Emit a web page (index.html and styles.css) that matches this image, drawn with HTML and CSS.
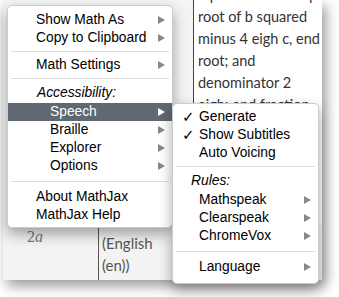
FILE: index.html
```html
<!DOCTYPE html>
<html lang="en">
<head>
    <meta charset="UTF-8">
    <title>MathJax menu</title>
    <link rel="stylesheet" href="styles.css">
</head>
<body>
    <div class="window">
        <div class="top-row">
            <div class="top-left">
                <div class="cut">alt text&nbsp;&nbsp;&nbsp;With Voice</div>
            </div>
            <div class="speech-text">
                <div class="cut">b plus or minus square</div>
                <div>root of b squared</div>
                <div>minus 4 eigh c, end</div>
                <div>root; and</div>
                <div>denominator 2</div>
                <div>eigh; end fraction</div>
            </div>
        </div>
        <div class="bottom-row">
            <div class="math-cell"><span>2</span><i>a</i></div>
            <div class="lang-cell">(English<br>(en))</div>
        </div>
    </div>

    <!-- context menu -->
    <div class="menu main-menu">
        <div class="item">
            <span class="text">Show Math As</span><span class="arrow"></span>
        </div>
        <div class="item">
            <span class="text">Copy to Clipboard</span><span class="arrow"></span>
        </div>
        <div class="rule"></div>
        <div class="item">
            <span class="text">Math Settings</span><span class="arrow"></span>
        </div>
        <div class="rule"></div>
        <div class="label">Accessibility:</div>
        <div class="item indent active">
            <span class="text">Speech</span><span class="arrow"></span>
        </div>
        <div class="item indent">
            <span class="text">Braille</span><span class="arrow"></span>
        </div>
        <div class="item indent">
            <span class="text">Explorer</span><span class="arrow"></span>
        </div>
        <div class="item indent">
            <span class="text">Options</span><span class="arrow"></span>
        </div>
        <div class="rule wide"></div>
        <div class="item">
            <span class="text">About MathJax</span>
        </div>
        <div class="item">
            <span class="text">MathJax Help</span>
        </div>
    </div>

    <!-- speech submenu -->
    <div class="menu sub-menu">
        <div class="item">
            <span class="check">&#10003;</span><span class="text">Generate</span>
        </div>
        <div class="item">
            <span class="check">&#10003;</span><span class="text">Show Subtitles</span>
        </div>
        <div class="item">
            <span class="check"></span><span class="text">Auto Voicing</span>
        </div>
        <div class="rule"></div>
        <div class="label">Rules:</div>
        <div class="item">
            <span class="check"></span><span class="text">Mathspeak</span><span class="arrow"></span>
        </div>
        <div class="item">
            <span class="check"></span><span class="text">Clearspeak</span><span class="arrow"></span>
        </div>
        <div class="item">
            <span class="check"></span><span class="text">ChromeVox</span><span class="arrow"></span>
        </div>
        <div class="rule wide"></div>
        <div class="item">
            <span class="check"></span><span class="text">Language</span><span class="arrow"></span>
        </div>
    </div>
</body>
</html>
```

FILE: styles.css
```css
* {
    margin: 0;
    padding: 0;
    box-sizing: border-box;
}

body {
    position: relative;
    width: 339px;
    height: 297px;
    overflow: hidden;
    background: #fff;
    font-family: "Liberation Sans", Arial, sans-serif;
}

/* page behind the menu */
.window {
    margin-left: 3px;
    width: 319px;
    height: 280px;
    background: #f4f4f4;
    box-shadow: 4px 6px 12px rgba(0, 0, 0, 0.4);
    overflow: hidden;
    display: flex;
    flex-direction: column;
}

.top-row {
    display: flex;
    height: 225px;
}

.top-left {
    width: 190px;
    padding-left: 17px;
    font-family: Lato, sans-serif;
    font-size: 14.5px;
    line-height: 22px;
    color: #555;
    white-space: nowrap;
    overflow: hidden;
}

.top-left .cut {
    margin-top: -16px;
}

.speech-text {
    flex: 1;
    background: #fff;
    border-left: 1px solid #444;
    padding-left: 4px;
    font-family: Lato, sans-serif;
    font-size: 14.5px;
    line-height: 22px;
    color: #333;
    white-space: nowrap;
    overflow: hidden;
}

.speech-text .cut {
    margin-top: -16px;
}

.bottom-row {
    flex: 1;
    display: flex;
    background: #f3f3f3;
}

.math-cell {
    width: 96px;
    border-right: 1px solid #555;
    padding: 3px 0 0 24px;
    font-family: "Liberation Serif", serif;
    font-size: 16px;
    color: #777;
}

.lang-cell {
    padding: 7px 0 0 3px;
    font-family: Lato, sans-serif;
    font-size: 15px;
    line-height: 22px;
    color: #555;
}

/* context menus */
.menu {
    position: absolute;
    background: #fff;
    border: 1px solid #ccc;
    border-radius: 5px;
    box-shadow: 0 6px 14px rgba(0, 0, 0, 0.35);
    font-size: 13.8px;
    color: #000;
    white-space: nowrap;
}

.main-menu {
    left: 7px;
    top: 5px;
    width: 166px;
    padding: 5px 0 3px;
}

.sub-menu {
    left: 172px;
    top: 103px;
    width: 147px;
    padding: 4px 0 7px;
}

.item {
    display: flex;
    align-items: center;
    height: 18px;
    line-height: 18px;
    padding: 0 7px 0 28px;
}

.item .text {
    flex: 1;
}

.item.indent {
    padding-left: 42px;
}

.item.active {
    background: #606872;
    color: #fff;
}

.arrow {
    width: 0;
    height: 0;
    border-left: 7px solid #888;
    border-top: 4px solid transparent;
    border-bottom: 4px solid transparent;
}

.active .arrow {
    border-left-color: #fff;
}

.label {
    height: 20px;
    line-height: 18px;
    padding: 1px 0 0 29px;
    font-style: italic;
}

.rule {
    border-top: 1px solid #ddd;
    margin: 4px 3px;
}

.rule.wide {
    margin: 6px 3px;
}

.sub-menu .item {
    padding-left: 9px;
}

.sub-menu .label {
    padding-left: 18px;
}

.check {
    width: 17px;
    font-family: "DejaVu Sans", sans-serif;
    font-size: 15px;
}
```
